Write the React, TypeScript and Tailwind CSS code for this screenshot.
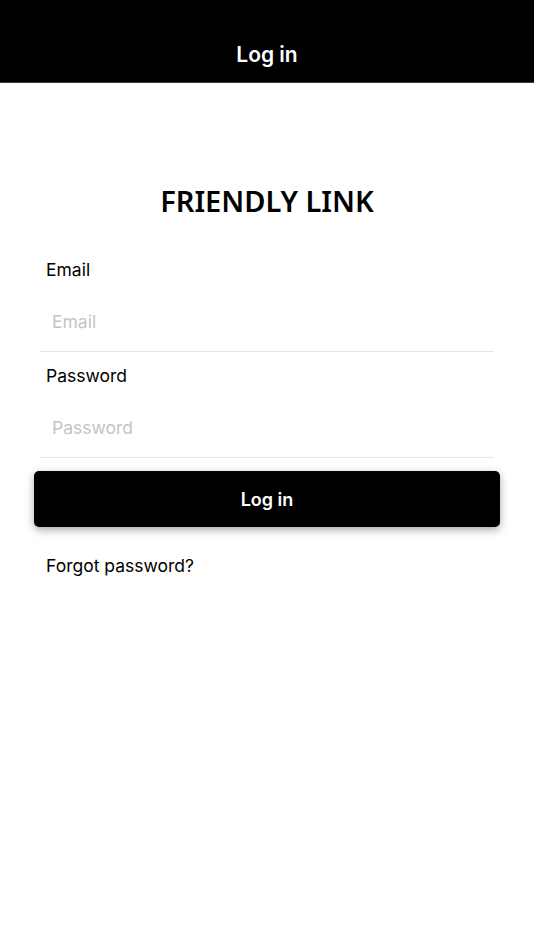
export default function App() {
  const font = { fontFamily: 'Inter, "Noto Sans", sans-serif' };
  return (
    <div className="min-h-[950px] w-[534px] bg-white" style={font}>
      <header className="flex h-[83px] items-end justify-center border-b border-[#3a3a3a] bg-black pb-[13px]">
        <h1 className="text-[21px] font-semibold leading-[28px] text-white">Log in</h1>
      </header>
      <main className="flex flex-col">
        <h2
          className="mt-[98px] h-[40px] text-center text-[29px] font-semibold leading-[40px] text-black"
          style={{ fontFamily: '"Noto Sans", sans-serif' }}
        >
          FRIENDLY LINK
        </h2>
        <div className="mt-[37px] pl-[39px] pr-[40px]">
          <label className="block pl-[7px] text-[17.5px] leading-[24px] text-black">Email</label>
          <div className="mt-[12px] flex h-[58px] items-center border-b border-[#e6e6ea] pl-[13px]">
            <input
              className="w-full bg-transparent text-[17.5px] text-black outline-none placeholder:text-[#c4c4c8]"
              placeholder="Email"
            />
          </div>
          <label className="mt-[12px] block pl-[7px] text-[17.5px] leading-[24px] text-black">Password</label>
          <div className="mt-[12px] flex h-[58px] items-center border-b border-[#e6e6ea] pl-[13px]">
            <input
              type="password"
              className="w-full bg-transparent text-[17.5px] text-black outline-none placeholder:text-[#c4c4c8]"
              placeholder="Password"
            />
          </div>
        </div>
        <div className="mt-[13px] px-[34px]">
          <button className="flex h-[56px] w-full items-center justify-center rounded-[5px] bg-black text-[18px] font-semibold text-white shadow-[0_3px_8px_rgba(0,0,0,0.35)]">
            Log in
          </button>
        </div>
        <div className="mt-[27px] pl-[46px] text-[17.5px] leading-[24px] text-black">Forgot password?</div>
      </main>
    </div>
  );
}
